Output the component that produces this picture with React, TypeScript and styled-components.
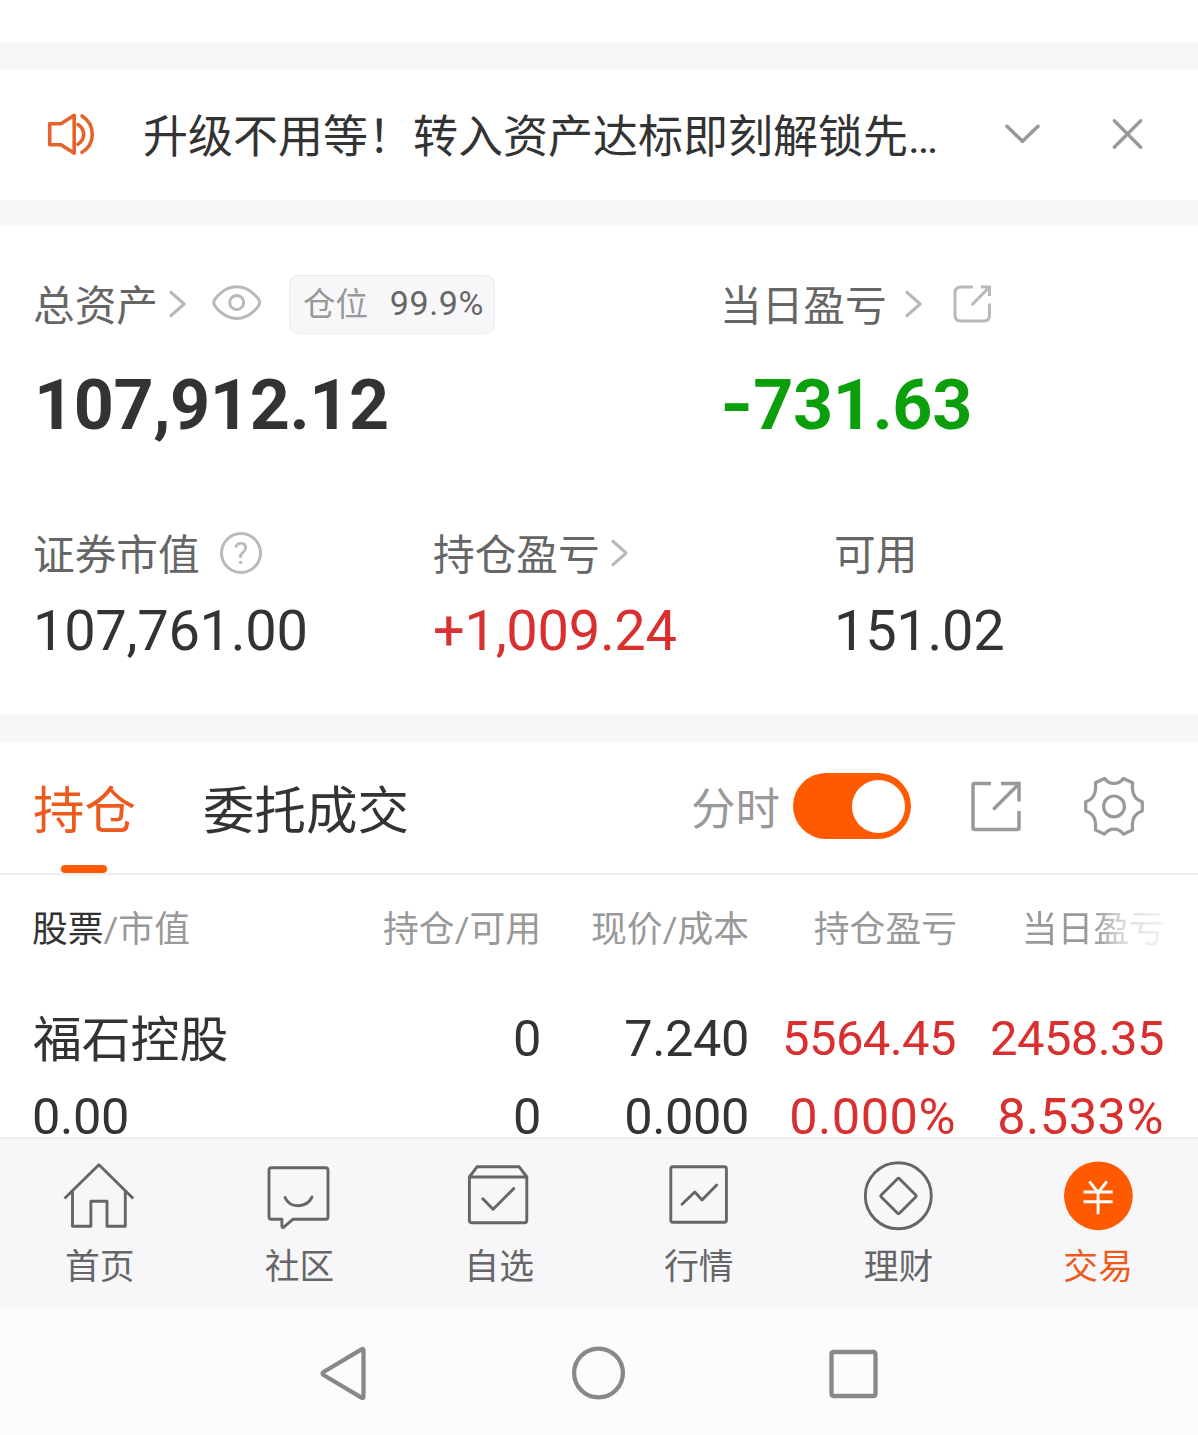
import React from "react";
import styled, { createGlobalStyle } from "styled-components";

const color = {
  ink: "#333333",
  label: "#666666",
  muted: "#999999",
  faint: "#b9b9b9",
  band: "#f7f7fa",
  line: "#eeeeee",
  accent: "#ff5a00",
  accentText: "#ee5a1c",
  up: "#d9302f",
  down: "#0b9f0b",
};

const GlobalStyle = createGlobalStyle`
  * { box-sizing: border-box; }
  body {
    margin: 0;
    background: #fff;
    color: ${color.ink};
    font-family: Roboto, "Noto Sans CJK SC", sans-serif;
    overflow: hidden;
  }
`;

const Screen = styled.div`
  width: 1198px;
  height: 1435px;
  display: flex;
  flex-direction: column;
  overflow: hidden;
  background: #fff;
`;

const Band = styled.div<{ $h?: number }>`
  flex: none;
  height: ${(p) => p.$h ?? 26}px;
  background: ${color.band};
`;

const TopGap = styled.div`
  flex: none;
  height: 43px;
`;

const Svg = styled.svg<{ $tone?: string; $weight?: number }>`
  display: block;
  flex: none;
  overflow: visible;
  fill: none;
  stroke: ${(p) => p.$tone ?? color.faint};
  stroke-width: ${(p) => p.$weight ?? 3};
  stroke-linecap: round;
  stroke-linejoin: round;
`;

/* Notice */
const Notice = styled.section`
  flex: none;
  height: 131px;
  padding: 0 55px 1px 47px;
  display: flex;
  align-items: center;
`;

const NoticeText = styled.p`
  margin: 7px 0 0 48px;
  flex: 1;
  font-size: 45px;
  line-height: 60px;
  white-space: nowrap;
`;

const NoticeActions = styled.div`
  display: flex;
  align-items: center;
  gap: 71px;
`;

/* Assets */
const Assets = styled.section`
  flex: none;
  height: 489px;
  padding: 48px 33px 0;
  display: flex;
  flex-direction: column;
`;

const Totals = styled.div`
  display: grid;
  grid-template-columns: 687px 1fr;
`;

const Breakdown = styled.div`
  display: grid;
  grid-template-columns: 400px 401px 1fr;
  margin-top: 78px;
`;

const LabelRow = styled.div`
  height: 60px;
  display: flex;
  align-items: center;
`;

const Label = styled.span<{ $gap?: number }>`
  font-size: 41.7px;
  line-height: 60px;
  color: ${color.label};
  margin: 5px ${(p) => p.$gap ?? 0}px 0 0;
`;

const PositionTag = styled.span`
  display: flex;
  align-items: center;
  justify-content: space-between;
  width: 206px;
  height: 59px;
  margin-left: 27px;
  padding: 0 10px 2px 13px;
  border: 1.5px solid #ececee;
  border-radius: 9px;
  background: ${color.band};
  font-size: 34px;
  letter-spacing: 0.6px;
  color: ${color.label};
`;

const TagName = styled.span`
  margin-top: 4px;
  font-size: 32.5px;
  line-height: 40px;
  letter-spacing: 0;
  color: ${color.muted};
`;

const BigNumber = styled.div<{ $tone?: string }>`
  margin: 31px 0 0 1px;
  font-size: 70px;
  font-weight: 700;
  line-height: 80px;
  letter-spacing: -0.4px;
  color: ${(p) => p.$tone ?? color.ink};
`;

const Sign = styled.span`
  display: inline-block;
  margin: 0 6px 0 -1px;
  transform: scaleX(1.22);
  transform-origin: left;
`;

const Amount = styled.div<{ $tone?: string }>`
  margin-top: 13px;
  font-size: 56px;
  line-height: 70px;
  letter-spacing: -0.3px;
  color: ${(p) => p.$tone ?? color.ink};
`;

const Help = styled.span`
  width: 42px;
  height: 42px;
  margin-left: 20px;
  border: 3px solid ${color.faint};
  border-radius: 50%;
  color: ${color.faint};
  font-size: 31px;
  line-height: 37px;
  text-align: center;
`;

/* Tabs */
const Tabs = styled.nav`
  flex: none;
  height: 133px;
  padding: 0 54px 0 33px;
  display: flex;
  border-bottom: 2px solid ${color.line};
`;

const Tab = styled.div<{ $active?: boolean }>`
  display: flex;
  flex-direction: column;
  align-items: center;
  justify-content: space-between;
  margin-right: 67px;
  padding-top: 35px;
  font-size: 51.5px;
  line-height: 70px;
  color: ${(p) => (p.$active ? color.accentText : color.ink)};
  &::after {
    content: "";
    width: 46px;
    height: 8px;
    margin-right: 2px;
    border-radius: 4px;
    background: ${(p) => (p.$active ? color.accent : "transparent")};
  }
`;

const Tools = styled.div`
  margin-left: auto;
  height: 128px;
  display: flex;
  align-items: center;
`;

const ToolLabel = styled.span`
  font-size: 44.5px;
  line-height: 60px;
  color: ${color.muted};
  margin: 7px 13px 0 0;
`;

const Toggle = styled.span`
  width: 118px;
  height: 66px;
  padding: 0 6px;
  border-radius: 33px;
  background: ${color.accent};
  display: flex;
  align-items: center;
  justify-content: flex-end;
  margin-right: 60px;
`;

const Knob = styled.span`
  width: 53px;
  height: 53px;
  border-radius: 50%;
  background: #fff;
`;

/* Holdings */
const Holdings = styled.section`
  flex: none;
  height: 262px;
  padding: 0 33px 0 32px;
`;

const Row = styled.div<{ $h: number }>`
  display: grid;
  grid-template-columns: 1fr 208px 208px 208px 208px;
  height: ${(p) => p.$h}px;
  line-height: ${(p) => p.$h}px;
  white-space: nowrap;
`;

const HeadRow = styled(Row)`
  margin: 25px 0 40px;
  font-size: 35.8px;
  color: ${color.muted};
  b {
    font-weight: 400;
    color: ${color.ink};
  }
`;

const Cell = styled.span<{ $tone?: string }>`
  text-align: right;
  color: ${(p) => p.$tone ?? "inherit"};
  &:first-child {
    text-align: left;
  }
`;

const FadedCell = styled(Cell)`
  mask-image: linear-gradient(
    to right,
    #000 66%,
    rgba(0, 0, 0, 0.35) 80%,
    rgba(0, 0, 0, 0.1) 100%
  );
`;

const DataRow = styled(Row)`
  font-size: 50.5px;
  letter-spacing: -0.4px;
`;

const StockName = styled(Cell)`
  padding: 2px 0 0 1px;
  font-size: 48.8px;
  letter-spacing: 0;
`;

const ProfitCell = styled(Cell)`
  padding-right: 1px;
  font-size: 49px;
  letter-spacing: -0.6px;
`;

const PercentCell = styled(Cell)`
  padding-right: 1px;
  letter-spacing: 0.5px;
`;

/* Bottom bar */
const BottomBar = styled.nav`
  flex: none;
  height: 171px;
  display: grid;
  grid-template-columns: repeat(6, 1fr);
  background: ${color.band};
  border-top: 2px solid ${color.line};
`;

const BarItem = styled.div<{ $active?: boolean }>`
  display: flex;
  flex-direction: column;
  align-items: center;
  padding-top: 21px;
  font-size: 34.8px;
  line-height: 50px;
  color: ${(p) => (p.$active ? color.accentText : color.label)};
`;

const BarLabel = styled.span`
  margin-top: 10px;
`;

const SystemBar = styled.footer`
  flex: none;
  height: 127px;
  display: flex;
  align-items: center;
  justify-content: center;
  gap: 199px;
  padding: 3px 1px 0 0;
  background: #fcfcfc;
`;

const ChevronRight = () => (
  <Svg width="18" height="28" viewBox="0 0 18 28">
    <path d="M2 1.5 L16.2 14 L2 26.5" strokeLinecap="butt" />
  </Svg>
);

const barItems = [
  {
    name: "首页",
    icon: (
      <>
        <path d="M0.5 38.5 L34.9 4.7 L69.2 38.5" strokeLinecap="butt" />
        <path d="M8.5 31.7 V66.3 H26.9 V41.3 H43 V66.3 H61.3 V31.7" />
      </>
    ),
  },
  {
    name: "社区",
    icon: (
      <>
        <path d="M8.5 7.7 H62.5 Q65 7.7 65 10.2 V56.8 Q65 59.3 62.5 59.3 H29.8 L20.5 67.3 Q18.9 68 18.9 66 V59.3 H8.5 Q6 59.3 6 56.8 V10.2 Q6 7.7 8.5 7.7Z" />
        <path d="M22 37.5 C27 48.5 43.5 48.5 49 37" />
      </>
    ),
  },
  {
    name: "自选",
    icon: (
      <>
        <path d="M6.4 17 H63.8 V60.2 Q63.8 62.7 61.3 62.7 H8.9 Q6.4 62.7 6.4 60.2Z" />
        <path d="M6.4 17 L14.2 6.7 H56 L63.8 17" />
        <path d="M19.8 38.8 L30.1 49.3 L50.8 28.5" />
      </>
    ),
  },
  {
    name: "行情",
    icon: (
      <>
        <rect x="7.8" y="6.7" width="55.6" height="55.6" rx="2" />
        <path d="M19 44.3 L31.8 32 L39 40 L53.7 25" />
      </>
    ),
  },
  {
    name: "理财",
    icon: (
      <>
        <circle cx="36.3" cy="35.8" r="33" />
        <path d="M19.5 34.8 L35.3 19 Q36.5 17.8 37.7 19 L53.5 34.8 Q54.7 36 53.5 37.2 L37.7 53 Q36.5 54.2 35.3 53 L19.5 37.2 Q18.3 36 19.5 34.8Z" />
      </>
    ),
  },
  {
    name: "交易",
    active: true,
    icon: (
      <>
        <circle cx="36.4" cy="35.8" r="34.4" fill={color.accent} stroke="none" />
        <path
          d="M27.4 21.3 L36.1 32.7 L44.9 21.3 M21.6 32 H50.6 M21.6 41.7 H50.6 M36.1 32 V54.3"
          stroke="#fff"
          strokeLinecap="butt"
        />
      </>
    ),
  },
];

export default function App() {
  return (
    <>
      <GlobalStyle />
      <Screen>
        <TopGap />
        <Band />
        <Notice>
          <Svg width="48" height="44" viewBox="0 0 48 44" $tone="#e5632b" $weight={3.6}>
            <path d="M2.7 11.8 H14 L27.2 3.3 V41.3 L14 32.8 H2.7Z" />
            <path d="M31 12.5 Q36.6 16 36.6 22.3 T31 32.3" />
            <path d="M35 4 Q45.3 10.5 45.3 22.3 T35 40.3" />
          </Svg>
          <NoticeText>升级不用等！转入资产达标即刻解锁先…</NoticeText>
          <NoticeActions>
            <Svg width="36" height="20" viewBox="0 0 36 20" $tone={color.muted} $weight={3.6}>
              <path d="M2 2.3 L17.5 17.3 L33 2.3" />
            </Svg>
            <Svg width="31" height="30" viewBox="0 0 31 30" $tone={color.muted} $weight={3.4}>
              <path d="M2.3 1.8 L28.7 28.2 M28.7 1.8 L2.3 28.2" />
            </Svg>
          </NoticeActions>
        </Notice>
        <Band />

        <Assets>
          <Totals>
            <div>
              <LabelRow>
                <Label $gap={10}>总资产</Label>
                <ChevronRight />
                <Svg width="50" height="38" viewBox="0 0 50 38" style={{ marginLeft: 26 }}>
                  <path d="M1.7 17.5 C1.7 14.5 11 1.8 24.7 1.8 S47.7 14.5 47.7 17.5 S38.4 33.4 24.7 33.4 S1.7 20.5 1.7 17.5Z" />
                  <circle cx="24.7" cy="17.5" r="7" />
                </Svg>
                <PositionTag>
                  <TagName>仓位</TagName>
                  99.9%
                </PositionTag>
              </LabelRow>
              <BigNumber>107,912.12</BigNumber>
            </div>
            <div>
              <LabelRow>
                <Label $gap={17}>当日盈亏</Label>
                <ChevronRight />
                <Svg width="40" height="38" viewBox="0 0 40 38" style={{ marginLeft: 30 }}>
                  <path
                    d="M21 2 H9 Q3 2 3 8 V30 Q3 36 9 36 H31.5 Q37.5 36 37.5 30 V18.5 M29 2 H37.5 V11"
                    strokeLinecap="butt"
                    strokeLinejoin="miter"
                  />
                  <path d="M20.5 19.3 L37 2.5" />
                </Svg>
              </LabelRow>
              <BigNumber $tone={color.down}>
                <Sign>-</Sign>731.63
              </BigNumber>
            </div>
          </Totals>
          <Breakdown>
            <div>
              <LabelRow>
                <Label>证券市值</Label>
                <Help>?</Help>
              </LabelRow>
              <Amount>107,761.00</Amount>
            </div>
            <div>
              <LabelRow>
                <Label $gap={10}>持仓盈亏</Label>
                <ChevronRight />
              </LabelRow>
              <Amount $tone={color.up}>+1,009.24</Amount>
            </div>
            <div>
              <LabelRow>
                <Label>可用</Label>
              </LabelRow>
              <Amount>151.02</Amount>
            </div>
          </Breakdown>
        </Assets>
        <Band $h={27} />

        <Tabs>
          <Tab $active>持仓</Tab>
          <Tab>委托成交</Tab>
          <Tools>
            <ToolLabel>分时</ToolLabel>
            <Toggle>
              <Knob />
            </Toggle>
            <Svg
              width="50"
              height="50"
              viewBox="0 0 50 50"
              $tone={color.muted}
              $weight={3.5}
              style={{ marginRight: 62 }}
            >
              <path
                d="M20 2.5 H3.5 Q2 2.5 2 4 V47 Q2 48.5 3.5 48.5 H46.5 Q48 48.5 48 47 V30 M30 2.5 H48 V20.5"
                strokeLinecap="butt"
                strokeLinejoin="miter"
              />
              <path d="M23.3 27.5 L47.5 3.3" />
            </Svg>
            <Svg width="61" height="60" viewBox="0 0 61 60" $tone={color.muted} $weight={3.2}>
              <path d="M21.7 2.5 Q25 7.5 31 7.5 T40.3 2.5 L49.6 6.8 C48.5 16.5 51.5 23.5 59.3 25.8 V35 C51.5 37.3 48.5 44.3 49.6 53.9 L40.3 58.2 Q37 53.2 31 53.2 T21.7 58.2 L12.4 53.9 C13.5 44.3 10.5 37.3 2.7 35 V25.8 C10.5 23.5 13.5 16.5 12.4 6.8Z" />
              <circle cx="31" cy="30.4" r="10.4" />
            </Svg>
          </Tools>
        </Tabs>

        <Holdings>
          <HeadRow $h={60}>
            <Cell>
              <b>股票</b>/市值
            </Cell>
            <Cell>持仓/可用</Cell>
            <Cell>现价/成本</Cell>
            <Cell>持仓盈亏</Cell>
            <FadedCell>当日盈亏</FadedCell>
          </HeadRow>
          <DataRow $h={78}>
            <StockName>福石控股</StockName>
            <Cell>0</Cell>
            <Cell>7.240</Cell>
            <ProfitCell $tone={color.up}>5564.45</ProfitCell>
            <ProfitCell $tone={color.up}>2458.35</ProfitCell>
          </DataRow>
          <DataRow $h={78}>
            <Cell>0.00</Cell>
            <Cell>0</Cell>
            <Cell>0.000</Cell>
            <PercentCell $tone={color.up}>0.000%</PercentCell>
            <PercentCell $tone={color.up}>8.533%</PercentCell>
          </DataRow>
        </Holdings>

        <BottomBar>
          {barItems.map((item) => (
            <BarItem key={item.name} $active={item.active}>
              <Svg width="72" height="72" viewBox="0 0 72 72" $tone={color.label} $weight={2.9}>
                {item.icon}
              </Svg>
              <BarLabel>{item.name}</BarLabel>
            </BarItem>
          ))}
        </BottomBar>

        <SystemBar>
          <Svg width="56" height="56" viewBox="0 0 56 56" $tone="#888" $weight={4.3}>
            <path d="M7.5 27 L45.5 4.3 Q47.5 3.3 47.5 5.5 V51.5 Q47.5 53.7 45.5 52.7 L7.5 30 Q5.5 28.5 7.5 27Z" />
          </Svg>
          <Svg width="56" height="56" viewBox="0 0 56 56" $tone="#888" $weight={4.3}>
            <circle cx="27.5" cy="28" r="24.4" />
          </Svg>
          <Svg width="56" height="56" viewBox="0 0 56 56" $tone="#888" $weight={4.3}>
            <rect x="5.5" y="7" width="44" height="44" rx="2" />
          </Svg>
        </SystemBar>
      </Screen>
    </>
  );
}
